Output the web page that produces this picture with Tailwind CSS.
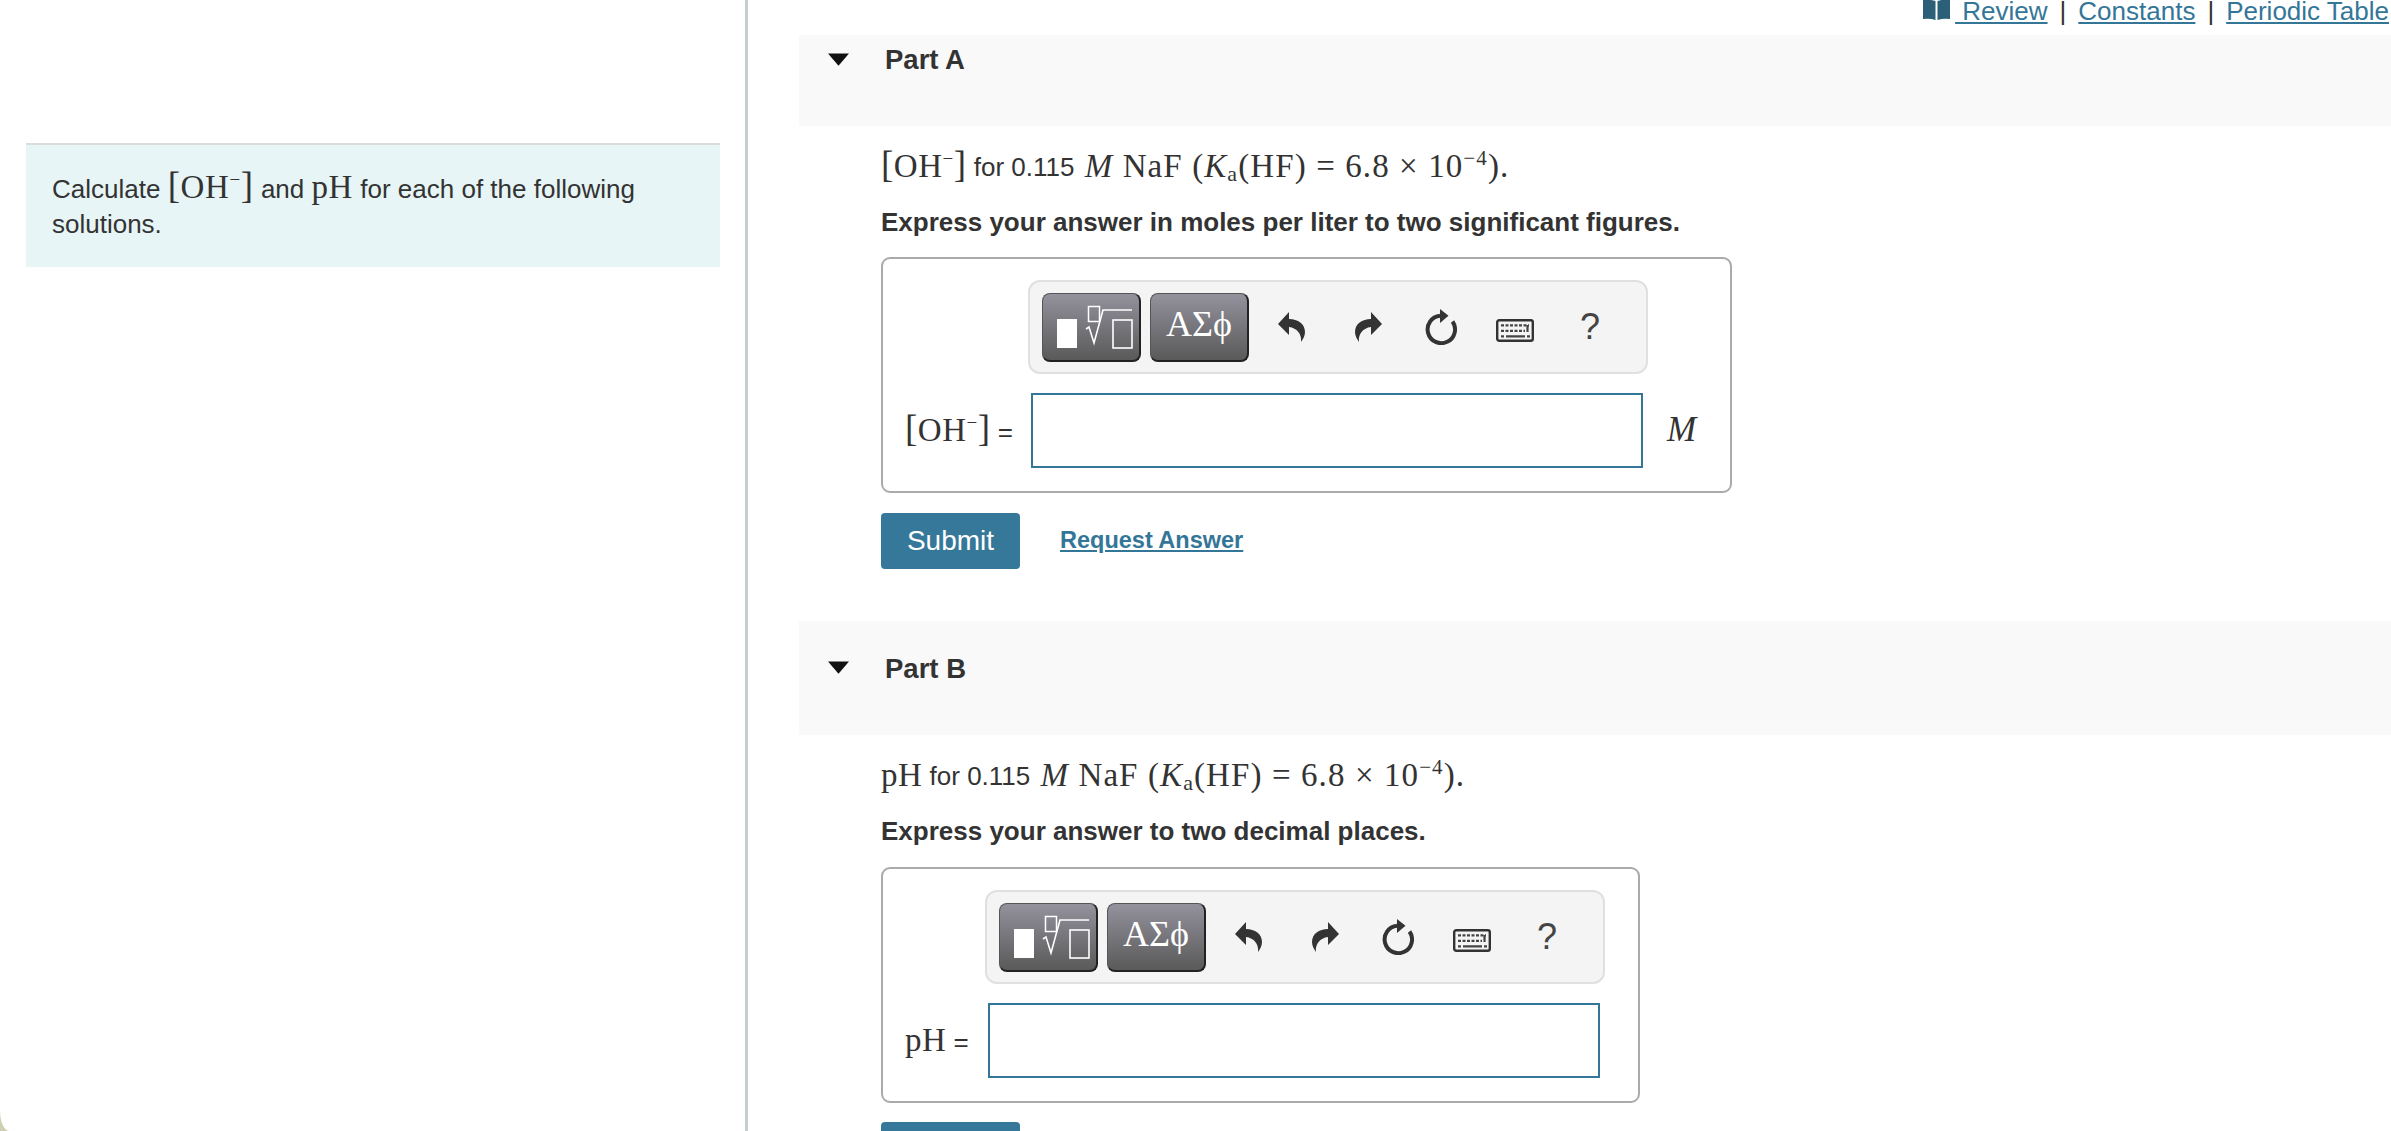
<!DOCTYPE html>
<html><head><meta charset="utf-8"><script src="https://cdn.jsdelivr.net/npm/@tailwindcss/browser@4"></script><title>Part A and B</title></head>
<body class="bg-[#cfcfb2]">
<div class="w-[2391px] h-[1131px] overflow-hidden flex bg-white rounded-bl-[9px_21px] font-['Liberation_Sans',Arial,sans-serif] text-[#333]">
  <aside class="w-[748px] h-full shrink-0 border-r-[3px] border-[#c5ced3] pt-[143px] pl-[26px] pr-[25px]">
    <div class="h-[124px] bg-[#e7f5f6] border-t-2 border-[#dcdcdc] pl-[26px] pr-[60px] pt-[25px] text-[26px] leading-[35px]">
      Calculate <span class="font-['Liberation_Serif',serif] text-[33px] tracking-[0.6px]"><span class="text-[37px] leading-[30px]">[</span>OH<sup class="text-[19px] -top-[12px]">−</sup><span class="text-[37px] leading-[30px]">]</span></span> and <span class="font-['Liberation_Serif',serif] text-[33px] leading-[30px] tracking-[0.6px]">pH</span> for each of the following solutions.
    </div>
  </aside>
  <main class="flex-1 min-w-0 pl-[51px]">
    <div class="h-[35px] flex justify-end items-start pr-[2px] text-[26px] leading-[22px] text-[#347698] whitespace-nowrap">
      <svg class="w-[27px] h-[20px]" viewBox="0 0 27 20"><path fill="#2b6078" d="M0 0q6-1 12.500 1v19q-6-2-12.500-1zM14.500 1q6-2 12.500-1v19q-6-1-12.500 1z"/></svg>
      <a class="underline ml-[5px]">&nbsp;Review</a><span class="text-[#333] mx-[12px]">|</span><a class="underline">Constants</a><span class="text-[#333] mx-[12px]">|</span><a class="underline">Periodic Table</a>
    </div>

    <section class="h-[91px] bg-[#f9f9f9] flex items-start pt-[11px] relative">
      <svg class="absolute left-[29px] top-[18px] w-[21px] h-[13px]" viewBox="0 0 24 14"><path fill="#111" d="M0 0h24L12 14z"/></svg>
      <h2 class="ml-[86px] text-[27.500px] leading-[28px] font-bold">Part A</h2>
    </section>
    <div class="pl-[82px]">
      <p class="h-[46px] mt-[18px] flex items-center text-[26px] whitespace-nowrap">
        <span class="font-['Liberation_Serif',serif] text-[33px] tracking-[0.5px]"><span class="text-[37px] leading-[30px]">[</span>OH<sup class="text-[19px] -top-[12px]">−</sup><span class="text-[37px] leading-[30px]">]</span></span>&nbsp;for 0.115&nbsp;<span class="ml-[3px] font-['Liberation_Serif',serif] text-[33px] tracking-[1.100px]"><i>M</i> NaF (<i>K</i><sub class="text-[22px] top-[4px]">a</sub>(HF) = 6.8 × 10<sup class="text-[21px] -top-[12px]">−4</sup>).</span>
      </p>
      <p class="mt-[17px] text-[26px] leading-[30px] font-bold whitespace-nowrap">Express your answer in moles per liter to two significant figures.</p>

      <div class="mt-[20px] w-[851px] h-[236px] border-2 border-[#aaa] rounded-[9px] pt-[21px] pl-[145px] relative">
        <div class="w-[620px] h-[94px] bg-[#f4f4f4] border-2 border-[#e0e0e0] rounded-[12px] flex items-center pl-[12px]">
          <button class="w-[99px] h-[69px] rounded-[8px] border border-[#555] border-r-2 border-r-[#222] border-b-2 border-b-[#222] bg-linear-to-b from-[#94929d] to-[#5a5a5a] overflow-hidden"><svg class="w-[99px] h-[68px]" viewBox="0 0 99 68"><rect x="14" y="25" width="20" height="29" fill="#fff"/><rect x="45.500" y="12.500" width="11" height="15" fill="none" stroke="#fff" stroke-width="1.500"/><path d="M43 35l3-2 5 16 9-33h29" fill="none" stroke="#fff" stroke-width="1.600"/><rect x="70" y="26" width="19" height="28" fill="none" stroke="#fff" stroke-width="1.600"/></svg></button>
          <button class="ml-[9px] w-[99px] h-[69px] rounded-[8px] border border-[#555] border-r-2 border-r-[#222] border-b-2 border-b-[#222] bg-linear-to-b from-[#94929d] to-[#5a5a5a] text-white font-['Liberation_Serif',serif] text-[36px] leading-[60px] pb-[6px]">ΑΣϕ</button>
          <svg class="ml-[29px] w-[27px] h-[30px]" viewBox="0 0 27 30"><path fill="#333" d="M0 12L11 0v7c9 0 16 5 16 13 0 4-2 7-4 10 1-8-4-14-12-15v8z"/></svg>
          <svg class="ml-[50px] w-[27px] h-[30px] -scale-x-100" viewBox="0 0 27 30"><path fill="#333" d="M0 12L11 0v7c9 0 16 5 16 13 0 4-2 7-4 10 1-8-4-14-12-15v8z"/></svg>
          <svg class="ml-[43px] w-[32px] h-[36px]" viewBox="0 0 32 36"><path d="M27.500 12.500A13.700 13.700 0 1 1 15 6.800" fill="none" stroke="#333" stroke-width="4"/><path fill="#333" d="M15 0l8.500 6.700L15 14z"/></svg>
          <svg class="ml-[39px] mt-[7px] w-[38px] h-[23px]" viewBox="0 0 38 23"><rect x="1.200" y="1.200" width="35.600" height="20.600" rx="2" fill="#f4f4f4" stroke="#333" stroke-width="2.400"/><path d="M5 6.300h28M5 11.800h24" stroke="#444" stroke-width="2.200" stroke-dasharray="3 1.500"/><path d="M31.500 6v7M5 17.300h3M10 17.300h19M31 17.300h3" stroke="#444" stroke-width="2.200"/></svg>
          <span class="ml-[46px] text-[36px] leading-none text-[#444]">?</span>
        </div>
        <div class="absolute left-0 top-[134px] w-full h-[75px] flex items-center">
          <span class="pl-[22px] w-[148px] whitespace-nowrap text-[26px]"><span class="font-['Liberation_Serif',serif] text-[33px] tracking-[0.5px]"><span class="text-[37px] leading-[30px]">[</span>OH<sup class="text-[19px] -top-[12px]">−</sup><span class="text-[37px] leading-[30px]">]</span></span> =</span>
          <div class="w-[612px] h-[75px] border-2 border-[#347698] bg-white"></div>
          <i class="ml-[24px] font-['Liberation_Serif',serif] text-[35px]">M</i>
        </div>
      </div>
      <div class="mt-[20px] h-[56px] flex items-center">
        <button class="w-[139px] h-[56px] rounded-[4px] bg-[#367899] text-white text-[28px]">Submit</button>
        <a class="ml-[40px] text-[23.500px] font-bold text-[#347698] underline">Request Answer</a>
      </div>
    </div>

    <section class="mt-[52px] h-[114px] bg-[#f9f9f9] flex items-start pt-[34px] relative">
      <svg class="absolute left-[29px] top-[40px] w-[21px] h-[13px]" viewBox="0 0 24 14"><path fill="#111" d="M0 0h24L12 14z"/></svg>
      <h2 class="ml-[86px] text-[27.500px] leading-[28px] font-bold">Part B</h2>
    </section>
    <div class="pl-[82px]">
      <p class="h-[46px] mt-[18px] flex items-center text-[26px] whitespace-nowrap">
        <span class="font-['Liberation_Serif',serif] text-[33px] tracking-[0.5px]">pH</span>&nbsp;for 0.115&nbsp;<span class="ml-[3px] font-['Liberation_Serif',serif] text-[33px] tracking-[1.100px]"><i>M</i> NaF (<i>K</i><sub class="text-[22px] top-[4px]">a</sub>(HF) = 6.8 × 10<sup class="text-[21px] -top-[12px]">−4</sup>).</span>
      </p>
      <p class="mt-[17px] text-[26px] leading-[30px] font-bold whitespace-nowrap">Express your answer to two decimal places.</p>
      <div class="mt-[21px] w-[759px] h-[236px] border-2 border-[#aaa] rounded-[9px] pt-[21px] pl-[102px] relative">
        <div class="w-[620px] h-[94px] bg-[#f4f4f4] border-2 border-[#e0e0e0] rounded-[12px] flex items-center pl-[12px]">
          <button class="w-[99px] h-[69px] rounded-[8px] border border-[#555] border-r-2 border-r-[#222] border-b-2 border-b-[#222] bg-linear-to-b from-[#94929d] to-[#5a5a5a] overflow-hidden"><svg class="w-[99px] h-[68px]" viewBox="0 0 99 68"><rect x="14" y="25" width="20" height="29" fill="#fff"/><rect x="45.500" y="12.500" width="11" height="15" fill="none" stroke="#fff" stroke-width="1.500"/><path d="M43 35l3-2 5 16 9-33h29" fill="none" stroke="#fff" stroke-width="1.600"/><rect x="70" y="26" width="19" height="28" fill="none" stroke="#fff" stroke-width="1.600"/></svg></button>
          <button class="ml-[9px] w-[99px] h-[69px] rounded-[8px] border border-[#555] border-r-2 border-r-[#222] border-b-2 border-b-[#222] bg-linear-to-b from-[#94929d] to-[#5a5a5a] text-white font-['Liberation_Serif',serif] text-[36px] leading-[60px] pb-[6px]">ΑΣϕ</button>
          <svg class="ml-[29px] w-[27px] h-[30px]" viewBox="0 0 27 30"><path fill="#333" d="M0 12L11 0v7c9 0 16 5 16 13 0 4-2 7-4 10 1-8-4-14-12-15v8z"/></svg>
          <svg class="ml-[50px] w-[27px] h-[30px] -scale-x-100" viewBox="0 0 27 30"><path fill="#333" d="M0 12L11 0v7c9 0 16 5 16 13 0 4-2 7-4 10 1-8-4-14-12-15v8z"/></svg>
          <svg class="ml-[43px] w-[32px] h-[36px]" viewBox="0 0 32 36"><path d="M27.500 12.500A13.700 13.700 0 1 1 15 6.800" fill="none" stroke="#333" stroke-width="4"/><path fill="#333" d="M15 0l8.500 6.700L15 14z"/></svg>
          <svg class="ml-[39px] mt-[7px] w-[38px] h-[23px]" viewBox="0 0 38 23"><rect x="1.200" y="1.200" width="35.600" height="20.600" rx="2" fill="#f4f4f4" stroke="#333" stroke-width="2.400"/><path d="M5 6.300h28M5 11.800h24" stroke="#444" stroke-width="2.200" stroke-dasharray="3 1.500"/><path d="M31.500 6v7M5 17.300h3M10 17.300h19M31 17.300h3" stroke="#444" stroke-width="2.200"/></svg>
          <span class="ml-[46px] text-[36px] leading-none text-[#444]">?</span>
        </div>
        <div class="absolute left-0 top-[134px] w-full h-[75px] flex items-center">
          <span class="pl-[22px] w-[105px] whitespace-nowrap text-[26px]"><span class="font-['Liberation_Serif',serif] text-[33px] tracking-[0.5px]">pH</span> =</span>
          <div class="w-[612px] h-[75px] border-2 border-[#347698] bg-white"></div>
        </div>
      </div>
      <button class="mt-[19px] w-[139px] h-[56px] rounded-[4px] bg-[#367899] text-white text-[28px]">Submit</button>
    </div>
  </main>
</div>
</body></html>
